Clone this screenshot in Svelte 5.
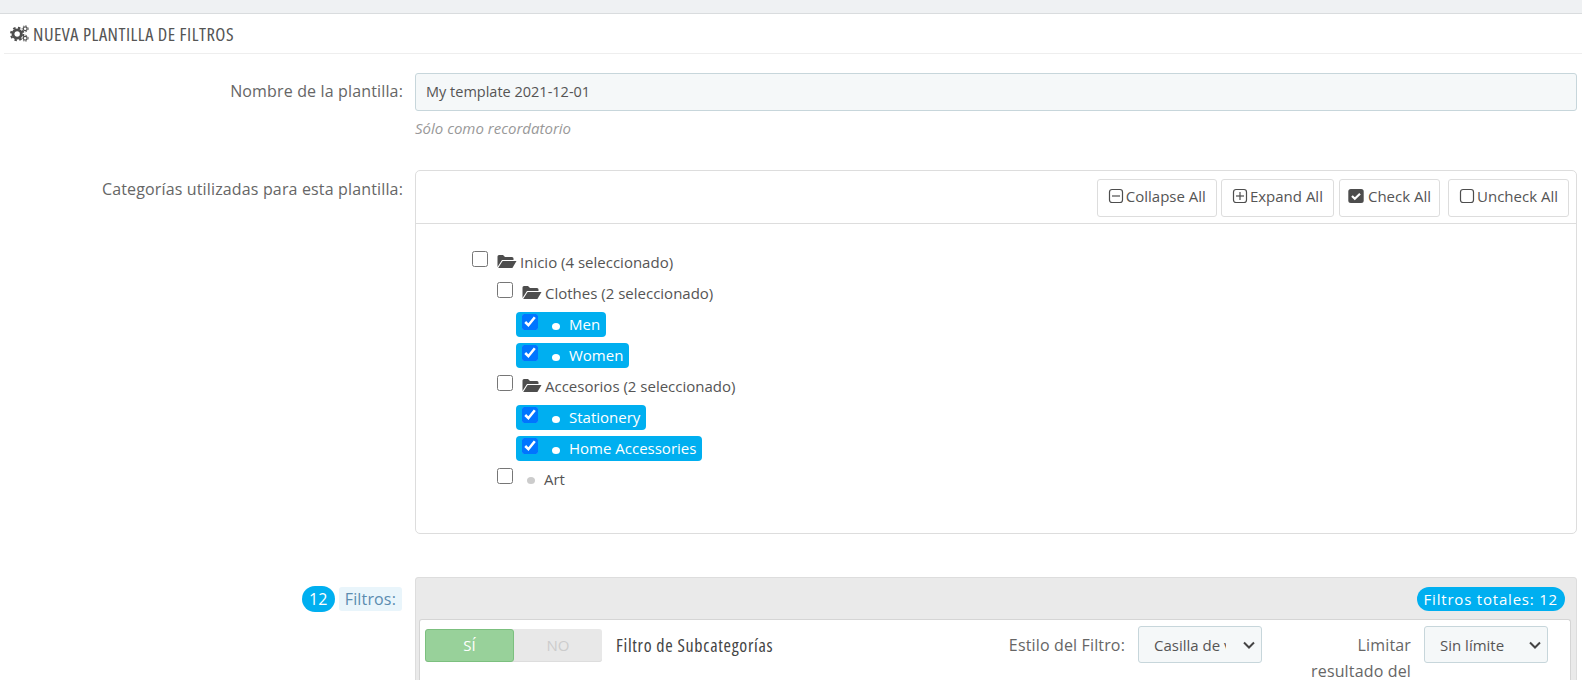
<script>
  const toolbar = [
    { label: 'Collapse All', icon: 'minus' },
    { label: 'Expand All', icon: 'plus' },
    { label: 'Check All', icon: 'check' },
    { label: 'Uncheck All', icon: 'empty' }
  ];

  const tree = [
    { label: 'Clothes (2 seleccionado)', children: ['Men', 'Women'] },
    { label: 'Accesorios (2 seleccionado)', children: ['Stationery', 'Home Accessories'] }
  ];
</script>

<div class="page">
  <div class="topbar"></div>
  <section class="panel">
    <h3 class="heading">
      <svg class="cogs" viewBox="0 0 20 18" width="19" height="17" aria-hidden="true">
        <circle cx="7.5" cy="9.5" r="4.4" fill="none" stroke="#4d4d4d" stroke-width="3" />
        <circle cx="7.5" cy="9.5" r="6.6" fill="none" stroke="#4d4d4d" stroke-width="2" stroke-dasharray="2.6 2.6" />
        <circle cx="16" cy="4" r="2" fill="none" stroke="#4d4d4d" stroke-width="1.2" />
        <circle cx="16" cy="4" r="3.2" fill="none" stroke="#4d4d4d" stroke-width="1" stroke-dasharray="1.5 1.5" />
        <circle cx="16" cy="14" r="2" fill="none" stroke="#4d4d4d" stroke-width="1.2" />
        <circle cx="16" cy="14" r="3.2" fill="none" stroke="#4d4d4d" stroke-width="1" stroke-dasharray="1.5 1.5" />
      </svg>
      <span>NUEVA PLANTILLA DE FILTROS</span>
    </h3>

    <div class="row name-row">
      <label class="label" for="tpl-name">Nombre de la plantilla:</label>
      <div>
        <input id="tpl-name" class="text-input" type="text" value="My template 2021-12-01" />
        <p class="help">Sólo como recordatorio</p>
      </div>
    </div>

    <div class="row cat-row">
      <div class="label">Categorías utilizadas para esta plantilla:</div>
      <div class="tree-panel">
        <div class="tree-toolbar">
          {#each toolbar as btn}
            <button class="tool-btn {btn.icon}" type="button">
              <svg viewBox="0 0 16 16" width="16" height="16" aria-hidden="true">
                {#if btn.icon === 'check'}
                  <rect x="0.3" y="1" width="15.4" height="14" rx="2.5" fill="#4d4d4d" />
                  <path d="M4 8l2.8 2.8L12 5.8" fill="none" stroke="#fff" stroke-width="2.2" />
                {:else}
                  <rect x="1.5" y="1.5" width="13" height="13" rx="2.5" fill="none" stroke="#4d4d4d" stroke-width="1.2" />
                  {#if btn.icon !== 'empty'}
                    <path d="M4 8h8" stroke="#4d4d4d" stroke-width="1.2" />
                  {/if}
                  {#if btn.icon === 'plus'}
                    <path d="M8 4v8" stroke="#4d4d4d" stroke-width="1.2" />
                  {/if}
                {/if}
              </svg>
              <span>{btn.label}</span>
            </button>
          {/each}
        </div>

        <div class="tree">
          <div class="node root">
            <input type="checkbox" />
            <svg class="folder" viewBox="0 0 20 15" width="20" height="15" aria-hidden="true">
              <path d="M0.5 13V2.5Q0.5 1 2 1H6L8 3H15Q16.5 3 16.5 4.5V6H5L0.5 13Z" fill="#4d4d4d" />
              <path d="M5.6 7H19.5L15.4 14H1.2Z" fill="#4d4d4d" />
            </svg>
            <span>Inicio (4 seleccionado)</span>
          </div>
          {#each tree as group}
            <div class="node branch">
              <input type="checkbox" />
              <svg class="folder" viewBox="0 0 20 15" width="20" height="15" aria-hidden="true">
                <path d="M0.5 13V2.5Q0.5 1 2 1H6L8 3H15Q16.5 3 16.5 4.5V6H5L0.5 13Z" fill="#4d4d4d" />
                <path d="M5.6 7H19.5L15.4 14H1.2Z" fill="#4d4d4d" />
              </svg>
              <span>{group.label}</span>
            </div>
            {#each group.children as leaf}
              <div class="leaf">
                <input type="checkbox" checked />
                <i class="dot"></i>
                <span>{leaf}</span>
              </div>
            {/each}
          {/each}
          <div class="node branch art">
            <input type="checkbox" />
            <i class="dot"></i>
            <span>Art</span>
          </div>
        </div>
      </div>
    </div>

    <div class="row filters-row">
      <div class="label filters-label">
        <span class="count">12</span>
        <span class="tag">Filtros:</span>
      </div>
      <div class="filters-panel">
        <div class="filters-head"><span class="total">Filtros totales: 12</span></div>
        <div class="filter-card">
          <div class="switch">
            <span class="on">SÍ</span>
            <span class="off">NO</span>
          </div>
          <div class="filter-title">Filtro de Subcategorías</div>
          <label class="field-label style-label" for="f-style">Estilo del Filtro:</label>
          <select id="f-style" class="select">
            <option>Casilla de verificación</option>
          </select>
          <label class="field-label limit-label" for="f-limit">Limitar resultado del</label>
          <select id="f-limit" class="select">
            <option>Sin límite</option>
          </select>
        </div>
      </div>
    </div>
  </section>
</div>

<style>
  :global(body) {
    margin: 0;
    background: #fff;
  }

  .page {
    height: 680px;
    overflow: hidden;
    font-family: "Open Sans", sans-serif;
    font-size: 15px;
    color: #555;
  }

  .topbar {
    height: 13px;
    background: #eff1f3;
    border-bottom: 1px solid #d9dcde;
  }

  .heading {
    display: flex;
    align-items: center;
    gap: 4px;
    height: 39px;
    margin: 0 0 0 4px;
    padding-left: 6px;
    border-bottom: 1px solid #eee;
    font-size: 18.5px;
    font-weight: 400;
    font-stretch: 75%;
    letter-spacing: 0.5px;
    color: #555;
  }

  .row {
    display: grid;
    grid-template-columns: 403px 1fr;
    column-gap: 12px;
    padding-right: 5px;
  }

  .label {
    text-align: right;
    font-size: 16px;
    letter-spacing: 0.15px;
    color: #666;
  }

  .name-row {
    padding-top: 19px;
  }

  .name-row .label {
    padding-top: 7px;
  }

  .text-input {
    display: block;
    box-sizing: border-box;
    width: 100%;
    height: 38px;
    padding: 0 10px 2px;
    border: 1px solid #c7d6db;
    border-radius: 3px;
    background: #f5f8f9;
    font: inherit;
    font-size: 14.5px;
    color: #555;
  }

  .help {
    margin: 7px 0 0;
    font-size: 15px;
    font-style: italic;
    color: #999;
  }

  .cat-row {
    padding-top: 32px;
  }

  .cat-row .label {
    padding-top: 8px;
  }

  .tree-panel {
    box-sizing: border-box;
    height: 364px;
    border: 1px solid #ddd;
    border-radius: 5px;
  }

  .tree-toolbar {
    display: flex;
    justify-content: flex-end;
    gap: 4px;
    height: 53px;
    padding: 8px 7px 0 0;
    box-sizing: border-box;
    border-bottom: 1px solid #ddd;
  }

  .tool-btn {
    display: flex;
    align-items: center;
    gap: 2px;
    height: 38px;
    padding: 0 10px 4px;
    border: 1px solid #ddd;
    border-radius: 3px;
    background: #fff;
    font: inherit;
    color: #555;
  }

  .tool-btn.plus {
    margin-right: 1px;
  }

  .tool-btn.check {
    gap: 4px;
    padding: 0 8px 4px;
  }

  .tool-btn:last-child {
    margin-left: 4px;
  }

  .tree {
    display: flex;
    flex-direction: column;
    padding: 22px 0 0 56px;
  }

  .node {
    display: flex;
    align-items: center;
    height: 31px;
  }

  input[type="checkbox"] {
    width: 16px;
    height: 16px;
    margin: 0;
    flex: none;
  }

  .node input {
    margin-top: -6px;
  }

  .node .folder {
    margin-left: 9px;
    margin-right: 3px;
  }

  .branch {
    margin-left: 25px;
  }

  .leaf {
    display: flex;
    align-items: center;
    width: fit-content;
    height: 25px;
    margin: 4px 0 2px 44px;
    padding: 0 6px 2px 6px;
    box-sizing: border-box;
    border-radius: 4px;
    background: #00aff0;
    color: #fff;
  }

  .leaf input {
    margin-top: -3px;
  }

  .dot {
    width: 8px;
    height: 7px;
    margin: 5px 9px 0 14px;
    border-radius: 50%;
    background: #fff;
  }

  .art .dot {
    background: #ccc;
    margin: 4px 9px 0 14px;
  }

  .filters-row {
    padding-top: 43px;
  }

  .filters-label {
    display: flex;
    justify-content: flex-end;
    align-items: center;
    gap: 4px;
    height: 26px;
    margin-top: 8px;
    padding-right: 1px;
  }

  .count {
    display: flex;
    align-items: center;
    justify-content: center;
    width: 33px;
    height: 26px;
    margin-top: 1px;
    border-radius: 13px;
    background: #00aff0;
    color: #fff;
    font-size: 16px;
  }

  .tag {
    padding: 0 6px;
    height: 24px;
    line-height: 24px;
    margin-top: 1px;
    border-radius: 3px;
    background: #e9f5fb;
    color: #5b8cb0;
    font-size: 16px;
  }

  .filters-panel {
    height: 200px;
    border: 1px solid #ddd;
    border-radius: 3px 3px 0 0;
    background: #eaeaea;
  }

  .filters-head {
    display: flex;
    justify-content: flex-end;
    height: 41px;
    padding: 9px 11px 0 0;
    box-sizing: border-box;
  }

  .total {
    height: 24px;
    line-height: 24px;
    padding: 0 7px;
    border-radius: 12px;
    background: #00aff0;
    color: #fff;
    font-size: 15px;
    letter-spacing: 0.8px;
  }

  .filter-card {
    display: flex;
    align-items: flex-start;
    margin: 0 5px 0 3px;
    height: 160px;
    padding: 9px 0 0 5px;
    box-sizing: border-box;
    border: 1px solid #d5d5d5;
    border-bottom: 0;
    border-radius: 3px;
    background: #fff;
  }

  .switch {
    display: flex;
    flex: none;
    width: 177px;
    height: 33px;
    border-radius: 3px;
    background: #e8e8e8;
    box-shadow: inset 0 -1px 0 #ddd;
    font-size: 15px;
    line-height: 33px;
    text-align: center;
  }

  .on {
    width: 89px;
    box-sizing: border-box;
    border: 1px solid #7cc07f;
    border-radius: 3px;
    background: #98d19a;
    color: #fff;
    line-height: 31px;
  }

  .off {
    flex: 1;
    color: #ccc;
  }

  .filter-title {
    margin-left: 14px;
    width: 300px;
    font-size: 18px;
    line-height: 32px;
    font-weight: 500;
    font-stretch: 75%;
    letter-spacing: 0.7px;
    color: #444;
  }

  .field-label {
    flex: none;
    padding-top: 3px;
    font-size: 16px;
    letter-spacing: 0.15px;
    color: #666;
    text-align: right;
    line-height: 26px;
  }

  .style-label {
    margin-left: 90px;
    padding-right: 13px;
    width: 132px;
    box-sizing: border-box;
  }

  .limit-label {
    margin-left: 35px;
    width: 127px;
    padding-right: 13px;
    box-sizing: border-box;
  }

  .select {
    flex: none;
    appearance: none;
    width: 124px;
    height: 37px;
    margin-top: -3px;
    padding: 0 35px 0 15px;
    border: 1px solid #c7d6db;
    border-radius: 3px;
    background: #f5f8f9 url("data:image/svg+xml,%3Csvg xmlns='http://www.w3.org/2000/svg' width='12' height='8'%3E%3Cpath d='M1 1.5l5 5 5-5' fill='none' stroke='%23444' stroke-width='2'/%3E%3C/svg%3E") no-repeat right 6px center;
    font: inherit;
    color: #555;
  }
</style>
